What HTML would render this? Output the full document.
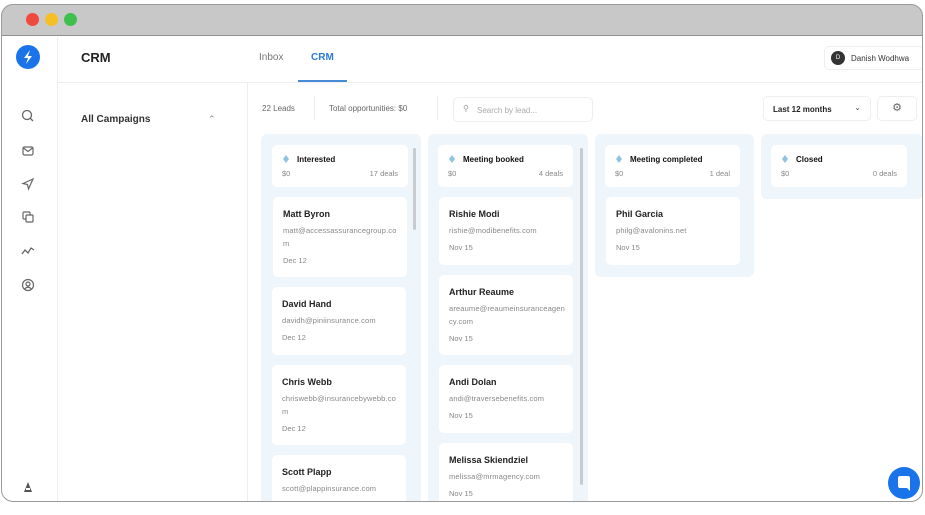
<!DOCTYPE html>
<html><head><style>
*{margin:0;padding:0;box-sizing:border-box}
body{width:925px;height:505px;background:#fff;font-family:"Liberation Sans",sans-serif;position:relative;overflow:hidden;color:#222}
.frame{position:absolute;left:1px;top:4px;width:922px;height:498px;border:1px solid #9a9a9a;border-radius:12px;z-index:10;pointer-events:none;box-shadow:0 0 0 6px #fff}
.tb{position:absolute;left:1px;top:4px;width:922px;height:32px;background:#c9c8c9;border-bottom:1px solid #8f8f8f;border-radius:12px 12px 0 0}
.dot{position:absolute;top:13px;width:13px;height:13px;border-radius:50%}
.a{position:absolute}
.col{position:absolute;background:#eef5fb;border-radius:6px}
.hc{position:absolute;background:#fff;border-radius:5px;height:42px}
.hc b{position:absolute;left:25px;top:10px;font-size:8px;color:#111}
.hc .d{position:absolute;left:11px;top:10px;width:6px;height:8px;background:#8fc3e0;clip-path:polygon(50% 0,100% 50%,50% 100%,0 50%)}
.hc .l{position:absolute;left:10px;top:24px;font-size:7.5px;color:#888}
.hc .r{position:absolute;right:10px;top:24px;font-size:7.5px;color:#888}
.card{position:absolute;background:#fff;border-radius:5px;width:134px}
.card b{position:absolute;left:10px;top:12px;font-size:9px;color:#222}
.card .e{position:absolute;left:10px;top:27px;width:117px;font-size:7.5px;letter-spacing:0.15px;color:#888;line-height:13px;word-break:break-all}
.card .t{position:absolute;left:10px;font-size:7.5px;color:#888}
.ic{position:absolute;left:21px;width:14px;height:14px}
</style></head><body>
<div class="tb"></div>
<div class="dot" style="left:26px;background:#f04a3e"></div>
<div class="dot" style="left:45px;background:#f5c026"></div>
<div class="dot" style="left:64px;background:#3fc04d"></div>
<!-- sidebar -->
<div class="a" style="left:57px;top:37px;width:1px;height:468px;background:#eee"></div>
<div class="a" style="left:16px;top:45px;width:24px;height:24px;border-radius:50%;background:#1a73e8"><svg width="24" height="24"><path d="M14 5 L8 13 H12 L10 19 L16 11 H12 Z" fill="#fff"/></svg></div>
<svg class="ic" style="top:109px" viewBox="0 0 14 14"><circle cx="6" cy="6" r="4.5" fill="none" stroke="#666" stroke-width="1.3"/><path d="M9.5 9.5 L12 12" stroke="#666" stroke-width="1.3"/></svg>
<svg class="ic" style="top:144px" viewBox="0 0 14 14"><rect x="2" y="3" width="10" height="8" rx="1.5" fill="none" stroke="#666" stroke-width="1.2"/><path d="M2.5 4 L7 7.5 L11.5 4" fill="none" stroke="#666" stroke-width="1.2"/></svg>
<svg class="ic" style="top:177px" viewBox="0 0 14 14"><path d="M12 2 L2 6.5 L6.5 7.5 L7.5 12 Z" fill="none" stroke="#666" stroke-width="1.2"/></svg>
<svg class="ic" style="top:210px" viewBox="0 0 14 14"><rect x="2" y="2" width="7" height="7" rx="1" fill="none" stroke="#666" stroke-width="1.2"/><rect x="5" y="5" width="7" height="7" rx="1" fill="#fff" stroke="#666" stroke-width="1.2"/></svg>
<svg class="ic" style="top:244px" viewBox="0 0 14 14"><path d="M1 10 L4 6 L7 9 L10 4 L13 6" fill="none" stroke="#666" stroke-width="1.3"/></svg>
<svg class="ic" style="top:278px" viewBox="0 0 14 14"><circle cx="7" cy="7" r="5.5" fill="none" stroke="#666" stroke-width="1.2"/><circle cx="7" cy="6" r="2" fill="none" stroke="#666" stroke-width="1.2"/><path d="M3.5 11 Q7 7.5 10.5 11" fill="none" stroke="#666" stroke-width="1.2"/></svg>
<svg class="ic" style="top:480px" viewBox="0 0 14 14"><path d="M3 12 L7 2 L11 12 Z" fill="#555"/><rect x="5" y="8" width="4" height="2" fill="#fff"/></svg>
<!-- header -->
<div class="a" style="left:81px;top:50px;font-size:13px;font-weight:bold;color:#222">CRM</div>
<div class="a" style="left:259px;top:52px;font-size:10px;color:#777">Inbox</div>
<div class="a" style="left:311px;top:52px;font-size:10px;color:#2b7bd6;font-weight:bold">CRM</div>
<div class="a" style="left:298px;top:80px;width:49px;height:2px;background:#4a8bd6"></div>
<div class="a" style="left:58px;top:82px;width:865px;height:1px;background:#eee"></div>
<div class="a" style="left:824px;top:46px;width:100px;height:24px;border:1px solid #eee;border-radius:5px;background:#fff"></div>
<div class="a" style="left:831px;top:51px;width:14px;height:14px;border-radius:50%;background:#333;color:#fff;font-size:6px;text-align:center;line-height:14px">D</div>
<div class="a" style="left:851px;top:54px;font-size:8px;color:#333">Danish Wodhwa</div>
<!-- left panel -->
<div class="a" style="left:247px;top:83px;width:1px;height:422px;background:#eee"></div>
<div class="a" style="left:81px;top:114px;font-size:10px;font-weight:bold;color:#333">All Campaigns</div>
<div class="a" style="left:208px;top:114px;font-size:9px;color:#888">⌃</div>
<!-- toolbar -->
<div class="a" style="left:262px;top:104px;font-size:8px;color:#666">22 Leads</div>
<div class="a" style="left:314px;top:96px;width:1px;height:24px;background:#eee"></div>
<div class="a" style="left:329px;top:104px;font-size:8px;color:#666">Total opportunities: $0</div>
<div class="a" style="left:437px;top:96px;width:1px;height:24px;background:#eee"></div>
<div class="a" style="left:453px;top:97px;width:140px;height:25px;border:1px solid #eee;border-radius:5px;font-size:8px;color:#aaa;padding:8px 0 0 23px">Search by lead...</div>
<div class="a" style="left:463px;top:104px;font-size:8px;color:#999">⚲</div>
<div class="a" style="left:763px;top:96px;width:108px;height:25px;border:1px solid #eee;border-radius:5px;font-size:8px;color:#222;font-weight:bold;padding:8px 0 0 9px">Last 12 months<span style="position:absolute;right:9px;top:6px;font-weight:normal;color:#555">⌄</span></div>
<div class="a" style="left:877px;top:96px;width:40px;height:25px;border:1px solid #eee;border-radius:5px;text-align:center;font-size:11px;color:#666;line-height:23px">⚙</div>
<!-- columns -->
<div class="col" style="left:261px;top:134px;width:160px;height:371px"></div>
<div class="col" style="left:428px;top:134px;width:160px;height:371px"></div>
<div class="col" style="left:595px;top:134px;width:159px;height:143px"></div>
<div class="col" style="left:761px;top:134px;width:162px;height:65px"></div>
<div class="a" style="left:413px;top:148px;width:3px;height:82px;background:#c8ccd0;border-radius:2px"></div>
<div class="a" style="left:580px;top:148px;width:3px;height:337px;background:#c8ccd0;border-radius:2px"></div>

<div class="hc" style="left:272px;top:145px;width:136px"><i class="d"></i><b>Interested</b><span class="l">$0</span><span class="r">17 deals</span></div>
<div class="hc" style="left:438px;top:145px;width:135px"><i class="d"></i><b>Meeting booked</b><span class="l">$0</span><span class="r">4 deals</span></div>
<div class="hc" style="left:605px;top:145px;width:135px"><i class="d"></i><b>Meeting completed</b><span class="l">$0</span><span class="r">1 deal</span></div>
<div class="hc" style="left:771px;top:145px;width:136px"><i class="d"></i><b>Closed</b><span class="l">$0</span><span class="r">0 deals</span></div>

<div class="card" style="left:273px;top:197px;height:80px"><b>Matt Byron</b><div class="e">matt@accessassurancegroup.com</div><div class="t" style="top:59px">Dec 12</div></div>
<div class="card" style="left:272px;top:287px;height:68px"><b>David Hand</b><div class="e">davidh@piniinsurance.com</div><div class="t" style="top:46px">Dec 12</div></div>
<div class="card" style="left:272px;top:365px;height:80px"><b>Chris Webb</b><div class="e">chriswebb@insurancebywebb.com</div><div class="t" style="top:59px">Dec 12</div></div>
<div class="card" style="left:272px;top:455px;height:60px"><b>Scott Plapp</b><div class="e">scott@plappinsurance.com</div></div>

<div class="card" style="left:439px;top:197px;height:68px"><b>Rishie Modi</b><div class="e">rishie@modibenefits.com</div><div class="t" style="top:46px">Nov 15</div></div>
<div class="card" style="left:439px;top:275px;height:80px"><b>Arthur Reaume</b><div class="e">areaume@reaumeinsuranceagency.com</div><div class="t" style="top:59px">Nov 15</div></div>
<div class="card" style="left:439px;top:365px;height:68px"><b>Andi Dolan</b><div class="e">andi@traversebenefits.com</div><div class="t" style="top:46px">Nov 15</div></div>
<div class="card" style="left:439px;top:443px;height:70px"><b>Melissa Skiendziel</b><div class="e">melissa@mrmagency.com</div><div class="t" style="top:46px">Nov 15</div></div>

<div class="card" style="left:606px;top:197px;height:68px"><b>Phil Garcia</b><div class="e">philg@avalonins.net</div><div class="t" style="top:46px">Nov 15</div></div>

<div class="frame"></div>
<div class="a" style="left:888px;top:467px;width:32px;height:32px;border-radius:50%;background:#1a73e8;z-index:11"><svg width="32" height="32"><rect x="10" y="9" width="12" height="12" rx="2" fill="#fff"/><path d="M19 21 L22 24 L22 20 Z" fill="#fff"/></svg></div>
</body></html>
